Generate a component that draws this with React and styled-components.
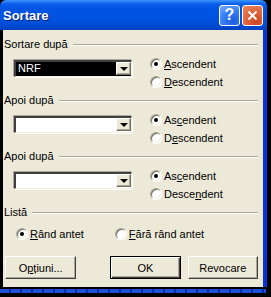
import styled, { createGlobalStyle } from "styled-components";

const Global = createGlobalStyle`
  html, body { margin: 0; padding: 0; background: #000; }
  body { font-family: "Liberation Sans", Arial, sans-serif; }
`;

const Window = styled.div`
  width: 271px;
  height: 297px;
  background: #000;
  display: flex;
  flex-direction: column;
  overflow: hidden;
`;

const TitleBar = styled.div`
  width: 267px;
  height: 30px;
  flex: none;
  box-sizing: border-box;
  display: flex;
  align-items: center;
  padding: 0 4px 0 3px;
  border-radius: 6px 6px 0 0;
  background: linear-gradient(
    #3d95ff 0px,
    #0a5ee8 4px,
    #0055e5 8px,
    #0052de 20px,
    #0048cf 27px,
    #0040bd 30px
  );
`;

const Title = styled.div`
  flex: 1;
  color: #fff;
  font-weight: bold;
  font-size: 13px;
  text-shadow: 1px 1px 0 #0a1e7a;
`;

const CaptionButton = styled.div`
  width: 21px;
  height: 21px;
  box-sizing: border-box;
  border: 1px solid #fff;
  border-radius: 3px;
  margin-left: 2px;
  display: flex;
  align-items: center;
  justify-content: center;
  color: #fff;
  font-weight: bold;
  font-size: 16px;
  background: ${(p) =>
    p.close
      ? "radial-gradient(circle at 70% 80%, #cc4422 0%, #e2683f 55%, #ee8c6a 100%)"
      : "radial-gradient(circle at 70% 80%, #1c5ee0 0%, #3a80f3 55%, #7fb1fa 100%)"};
`;

const Frame = styled.div`
  flex: 1;
  display: flex;
`;

const LeftEdge = styled.div`
  width: 3px;
  background: #000;
`;

const RightEdge = styled.div`
  width: 4px;
  background: #0831d9;
  margin-right: 4px;
`;

const Body = styled.div`
  width: 260px;
  height: 257px;
  background: #ece9d8;
  box-sizing: border-box;
  padding: 7px 5px 0 1px;
  display: flex;
  flex-direction: column;
  font-size: 11px;
  color: #000;
`;

const Header = styled.div`
  height: 14px;
  display: flex;
  align-items: center;
  line-height: 14px;
  gap: 5px;
  &::after {
    content: "";
    flex: 1;
    height: 0;
    border-top: 1px solid #aca899;
    border-bottom: 1px solid #fff;
    margin-top: 2px;
  }
`;

const Section = styled.div`
  height: 56px;
  display: flex;
  flex-direction: column;
  gap: 4px;
`;

const SortRow = styled.div`
  display: flex;
  align-items: flex-start;
`;

const Combo = styled.div`
  width: 118px;
  height: 17px;
  margin: 5px 0 0 10px;
  box-sizing: border-box;
  display: flex;
  background: ${(p) => (p.selected ? "#000" : "#fff")};
  border-style: solid;
  border-width: 2px 1px 1px 2px;
  border-color: #404040 #f1efe2 #f1efe2 #404040;
  box-shadow: -1px -1px 0 #aca899, 1px 1px 0 #fff;
`;

const ComboText = styled.div`
  flex: 1;
  color: #fff;
  line-height: 13px;
  padding-left: 2px;
`;

const DropButton = styled.div`
  width: 15px;
  height: 13px;
  box-sizing: border-box;
  background: #ece9d8;
  border-style: solid;
  border-width: 1px;
  border-color: #fff #716f64 #716f64 #fff;
  box-shadow: inset -1px -1px 0 #aca899;
  display: flex;
  align-items: center;
  justify-content: center;
  &::after {
    content: "";
    border-left: 4px solid transparent;
    border-right: 4px solid transparent;
    border-top: 4px solid #000;
    margin-top: 1px;
  }
`;

const RadioColumn = styled.div`
  margin-left: 18px;
  display: flex;
  flex-direction: column;
`;

const RadioLine = styled.label`
  height: 18px;
  display: flex;
  align-items: center;
  gap: 1px;
  margin-left: ${(p) => p.indent || 0}px;
`;

const Circle = styled.span`
  width: 12px;
  height: 12px;
  box-sizing: border-box;
  border-radius: 50%;
  background: #fff;
  border: 1px solid;
  border-color: #aca899 #fff #fff #aca899;
  box-shadow: inset 1px 1px 0 #716f64, inset -1px -1px 0 #f1efe2;
  margin-right: 1px;
  display: flex;
  align-items: center;
  justify-content: center;
  &::after {
    content: "";
    width: 4px;
    height: 4px;
    border-radius: 50%;
    background: ${(p) => (p.on ? "#000" : "transparent")};
  }
`;

const U = styled.span`
  text-decoration: underline;
`;

const ListSection = styled.div`
  display: flex;
  flex-direction: column;
  gap: 6px;
`;

const ListRow = styled.div`
  display: flex;
`;

const Buttons = styled.div`
  display: flex;
  margin-top: 13px;
  margin-left: 1px;
`;

const Button = styled.div`
  width: ${(p) => p.w}px;
  height: 23px;
  margin-left: ${(p) => p.gap || 0}px;
  box-sizing: border-box;
  display: flex;
  align-items: center;
  justify-content: center;
  background: #ece9d8;
  border: 1px solid;
  border-color: ${(p) => (p.def ? "#000" : "#fff #404040 #404040 #fff")};
  box-shadow: ${(p) =>
    p.def
      ? "inset 1px 1px 0 #fff, inset -1px -1px 0 #404040, inset -2px -2px 0 #aca899"
      : "inset -1px -1px 0 #aca899"};
`;

const Bottom = styled.div`
  height: 10px;
  display: flex;
  flex-direction: column;
`;

const BlueStrip = styled.div`
  margin-top: 2px;
  height: 4px;
  width: 266px;
  background: repeating-linear-gradient(
    90deg,
    #1d4fd8 0px,
    #1d4fd8 9px,
    #0a2aa8 9px,
    #0a2aa8 11px
  );
`;

const sections = [
  { label: "Apoi după", asc: ["As", "c", "endent"], desc: ["D", "e", "scendent"] },
  { label: "Apoi după", asc: ["As", "c", "endent"], desc: ["Desce", "n", "dent"] },
];

const Radio = ({ on, children, indent }) => (
  <RadioLine indent={indent}>
    <Circle on={on} />
    <span>{children}</span>
  </RadioLine>
);

export default function App() {
  return (
    <>
      <Global />
      <Window>
        <TitleBar>
          <Title>Sortare</Title>
          <CaptionButton>?</CaptionButton>
          <CaptionButton close>
            <svg width="11" height="11" viewBox="0 0 11 11">
              <path d="M1.5 1.5 L9.5 9.5 M9.5 1.5 L1.5 9.5" stroke="#fff" strokeWidth="2" />
            </svg>
          </CaptionButton>
        </TitleBar>
        <Frame>
          <LeftEdge />
          <Body>
            <Section>
              <Header>Sortare după</Header>
              <SortRow>
                <Combo selected>
                  <ComboText>NRF</ComboText>
                  <DropButton />
                </Combo>
                <RadioColumn>
                  <Radio on>
                    <U>A</U>scendent
                  </Radio>
                  <Radio>
                    <U>D</U>escendent
                  </Radio>
                </RadioColumn>
              </SortRow>
            </Section>
            {sections.map((s, i) => (
              <Section key={i}>
                <Header>{s.label}</Header>
                <SortRow>
                  <Combo>
                    <ComboText />
                    <DropButton />
                  </Combo>
                  <RadioColumn>
                    <Radio on>
                      {s.asc[0]}
                      <U>{s.asc[1]}</U>
                      {s.asc[2]}
                    </Radio>
                    <Radio>
                      {s.desc[0]}
                      <U>{s.desc[1]}</U>
                      {s.desc[2]}
                    </Radio>
                  </RadioColumn>
                </SortRow>
              </Section>
            ))}
            <ListSection>
              <Header>Listă</Header>
              <ListRow>
                <Radio on indent={12}>
                  <U>R</U>ând antet
                </Radio>
                <Radio indent={31}>
                  <U>F</U>ără rând antet
                </Radio>
              </ListRow>
            </ListSection>
            <Buttons>
              <Button w={72}>
                <span>
                  O<U>p</U>țiuni...
                </span>
              </Button>
              <Button w={71} gap={34} def>
                OK
              </Button>
              <Button w={71} gap={7}>
                Revocare
              </Button>
            </Buttons>
          </Body>
          <RightEdge />
        </Frame>
        <Bottom>
          <BlueStrip />
        </Bottom>
      </Window>
    </>
  );
}
